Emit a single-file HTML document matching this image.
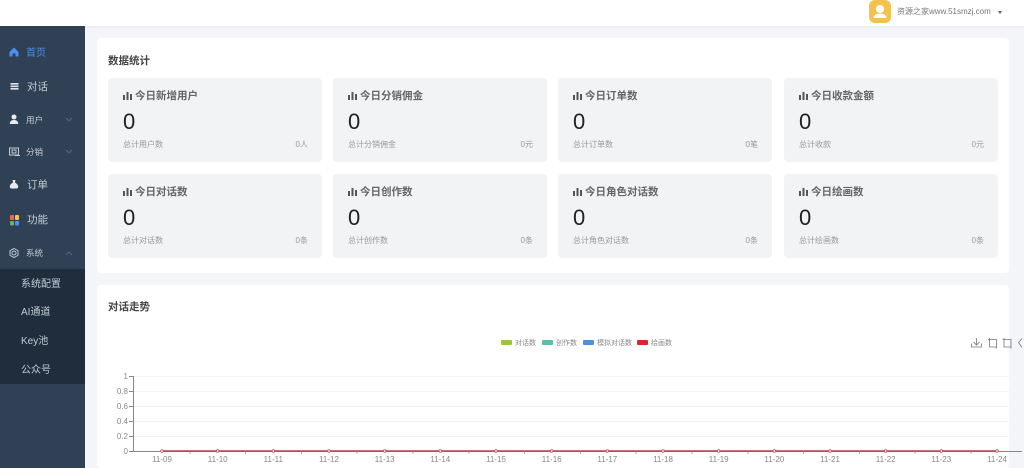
<!DOCTYPE html>
<html lang="zh"><head><meta charset="utf-8"><title>数据统计</title>
<style>
*{box-sizing:border-box;margin:0;padding:0}
html,body{width:1024px;height:468px;overflow:hidden;background:#f3f5f9;font-family:"Liberation Sans","Noto Sans CJK SC",sans-serif}
.a{position:absolute;white-space:nowrap}
#top{left:0;top:0;width:1024px;height:26px;background:#fff;box-shadow:0 1px 2px rgba(0,0,0,.06)}
#side{left:0;top:26px;width:85px;height:442px;background:#304156}
#sub{left:0;top:269px;width:85px;height:115px;background:#1f2d3d}
.m{color:#c3ccd6;line-height:14px;height:14px}
.s{color:#c3ccd6;font-size:10px;left:21px;line-height:14px}
.panel{background:#fff;border-radius:4px}
.stat{width:214px;height:84px;background:#f2f3f5;border-radius:4px}
.stat .t{position:absolute;left:27px;top:10px;font-size:10.5px;font-weight:700;color:#666;line-height:16px;white-space:nowrap}
.stat .n{position:absolute;left:15px;top:31px;font-size:22px;color:#222;line-height:26px}
.stat .l{position:absolute;left:15px;top:61px;font-size:8px;color:#999;line-height:12px;white-space:nowrap}
.stat .r{position:absolute;right:14px;top:61px;font-size:8px;color:#999;line-height:12px;white-space:nowrap}
.stat svg{position:absolute;left:15px;top:13px}
h2{font-size:10.5px;font-weight:700;color:#444;line-height:16px}
</style></head><body>
<div class="a" id="top"></div>
<div class="a" style="left:869px;top:0;width:22px;height:23px;border-radius:6px;background:#f2c14e"></div>
<svg class="a" style="left:869px;top:0" width="22" height="23" viewBox="0 0 22 23"><circle cx="11" cy="9" r="4" fill="#fff"/><path d="M4.5 18c0-3 3-4.500 6.500-4.500s6.500 1.500 6.500 4.500z" fill="#fff"/></svg>
<div class="a" style="left:897px;top:5px;font-size:8px;color:#777;line-height:13px">资源之家www.51smzj.com</div>
<div class="a" style="left:998px;top:11px;width:0;height:0;border-left:2.500px solid transparent;border-right:2.500px solid transparent;border-top:3px solid #666"></div>

<div class="a" id="side"></div>
<div class="a" id="sub"></div>
<svg class="a" style="left:0;top:26px" width="85" height="250" viewBox="0 26 85 250">
<path d="M9.500 52l4.500-4.500 4.500 4.500v4.500h-3v-3h-3v3h-3z" fill="#4a90f0"/>
<path d="M10.500 84h8v1.600h-8zM10.500 86.500h8v1.600h-8zM10.500 89h8v1.600h-8z" fill="#dfe4ea" transform="translate(0 -1)"/>
<circle cx="14" cy="117" r="2.500" fill="#e6eaef"/><path d="M9.800 124c0-3 1.800-4 4.200-4s4.200 1 4.200 4z" fill="#e6eaef"/>
<path d="M9.500 148h9v7h-9zM12 150h4v3h-4zM15 155.500h5" fill="none" stroke="#c3ccd6" stroke-width="1"/>
<path d="M12.500 180h3l-.6 2.500c2 1 3.300 2.500 3.300 4.200 0 1.300-1 1.800-2 1.800h-4.400c-1 0-2-.5-2-1.800 0-1.700 1.300-3.200 3.300-4.200z" fill="#e6eaef"/>
<rect x="10" y="215" width="4" height="5" rx="1" fill="#e8694a"/><rect x="15" y="215" width="4" height="5" rx="1" fill="#f2c14e"/><rect x="10" y="221" width="4" height="4.500" rx="1" fill="#5cb85c"/><rect x="15" y="221" width="4" height="4.500" rx="1" fill="#4a90f0"/>
<circle cx="14" cy="253" r="2" fill="none" stroke="#c3ccd6"/><path d="M14 248.500l4 2.250v4.500l-4 2.250-4-2.250v-4.500z" fill="none" stroke="#c3ccd6"/>
<path d="M66 118l3 3 3-3M66 150l3 3 3-3" fill="none" stroke="#58697c" stroke-width="1"/>
<path d="M66 255l3-3 3 3" fill="none" stroke="#58697c" stroke-width="1"/>
</svg>
<div class="a m" style="left:26px;top:47px;font-size:10px;color:#4a8cf0">首页</div>
<div class="a m" style="left:27px;top:80px;font-size:10.500px">对话</div>
<div class="a m" style="left:26px;top:113px;font-size:8.500px">用户</div>
<div class="a m" style="left:26px;top:145px;font-size:8.500px">分销</div>
<div class="a m" style="left:27px;top:178px;font-size:10.500px">订单</div>
<div class="a m" style="left:27px;top:213px;font-size:10.500px">功能</div>
<div class="a m" style="left:26px;top:246px;font-size:8.500px">系统</div>
<div class="a s" style="top:278px">系统配置</div>
<div class="a s" style="top:306px">AI通道</div>
<div class="a s" style="top:335px">Key池</div>
<div class="a s" style="top:364px">公众号</div>

<div class="a panel" style="left:97px;top:38px;width:912px;height:235px"></div>
<div class="a panel" style="left:97px;top:285px;width:912px;height:183px"></div>
<h2 class="a" style="left:108px;top:53px">数据统计</h2>
<h2 class="a" style="left:108px;top:299px">对话走势</h2>

<div class="a stat" style="left:108px;top:78px"><svg width="9" height="9"><path d="M0 4h2v5H0zM3.500 1h2v8h-2zM7 3h2v6H7z" fill="#555"/></svg><div class="t">今日新增用户</div><div class="n">0</div><div class="l">总计用户数</div><div class="r">0人</div></div>
<div class="a stat" style="left:333px;top:78px"><svg width="9" height="9"><path d="M0 4h2v5H0zM3.500 1h2v8h-2zM7 3h2v6H7z" fill="#555"/></svg><div class="t">今日分销佣金</div><div class="n">0</div><div class="l">总计分销佣金</div><div class="r">0元</div></div>
<div class="a stat" style="left:558px;top:78px"><svg width="9" height="9"><path d="M0 4h2v5H0zM3.500 1h2v8h-2zM7 3h2v6H7z" fill="#555"/></svg><div class="t">今日订单数</div><div class="n">0</div><div class="l">总计订单数</div><div class="r">0笔</div></div>
<div class="a stat" style="left:784px;top:78px"><svg width="9" height="9"><path d="M0 4h2v5H0zM3.500 1h2v8h-2zM7 3h2v6H7z" fill="#555"/></svg><div class="t">今日收款金额</div><div class="n">0</div><div class="l">总计收款</div><div class="r">0元</div></div>
<div class="a stat" style="left:108px;top:174px"><svg width="9" height="9"><path d="M0 4h2v5H0zM3.500 1h2v8h-2zM7 3h2v6H7z" fill="#555"/></svg><div class="t">今日对话数</div><div class="n">0</div><div class="l">总计对话数</div><div class="r">0条</div></div>
<div class="a stat" style="left:333px;top:174px"><svg width="9" height="9"><path d="M0 4h2v5H0zM3.500 1h2v8h-2zM7 3h2v6H7z" fill="#555"/></svg><div class="t">今日创作数</div><div class="n">0</div><div class="l">总计创作数</div><div class="r">0条</div></div>
<div class="a stat" style="left:558px;top:174px"><svg width="9" height="9"><path d="M0 4h2v5H0zM3.500 1h2v8h-2zM7 3h2v6H7z" fill="#555"/></svg><div class="t">今日角色对话数</div><div class="n">0</div><div class="l">总计角色对话数</div><div class="r">0条</div></div>
<div class="a stat" style="left:784px;top:174px"><svg width="9" height="9"><path d="M0 4h2v5H0zM3.500 1h2v8h-2zM7 3h2v6H7z" fill="#555"/></svg><div class="t">今日绘画数</div><div class="n">0</div><div class="l">总计绘画数</div><div class="r">0条</div></div>

<svg class="a" style="left:0;top:0" width="1024" height="468" viewBox="0 0 1024 468" font-family="Liberation Sans,Noto Sans CJK SC,sans-serif">
<rect x="501" y="340" width="11" height="5" rx="1" fill="#9bc53d"/>
<rect x="542" y="340" width="11" height="5" rx="1" fill="#5bbdaa"/>
<rect x="583" y="340" width="11" height="5" rx="1" fill="#4a90e2"/>
<rect x="637" y="340" width="11" height="5" rx="1" fill="#d9252b"/>
<g font-size="7" fill="#888"><text x="515" y="345">对话数</text><text x="556" y="345">创作数</text><text x="597" y="345">模拟对话数</text><text x="651" y="345">绘画数</text></g>
<g fill="none" stroke="#777" stroke-width=".8">
<path d="M976.500 338v7M973.500 342l3 3 3-3M971.500 343.500v3.500h10v-3.500"/>
<path d="M988 339.500h2M989.500 338v9h7.500M989.500 339.500h7v9"/>
<path d="M1002.500 339.500h2M1004 338v9h7.500M1004 339.500h7v9"/>
<path d="M1022 338.500l-3.500 4 3.500 5"/>
</g>
<g stroke="#f3f3f3" stroke-width="1"><path d="M134 376.500H1009M134 391.500H1009M134 406.500H1009M134 421.500H1009M134 436.500H1009"/></g>
<g stroke="#888" stroke-width="1" fill="none"><path d="M133.500 376V451.500M129 376.500h5M129 391.500h5M129 406.500h5M129 421.500h5M129 436.500h5M129 451.500h5"/><path d="M134 451.500H1022"/>
<path d="M190 451v3M245.500 451v3M301.500 451v3M357 451v3M413 451v3M469 451v3M524.500 451v3M580.500 451v3M636 451v3M692 451v3M748 451v3M803.500 451v3M859.500 451v3M915 451v3M971 451v3" stroke="#aaa"/></g>
<g font-size="8" fill="#888" text-anchor="end"><text x="128" y="379">1</text><text x="128" y="394">0.8</text><text x="128" y="409">0.6</text><text x="128" y="424">0.4</text><text x="128" y="439">0.2</text><text x="128" y="454">0</text></g>
<path d="M162 451H997" stroke="#b5444e" stroke-width="1.500" fill="none"/>
<g fill="#fff" stroke="#c2505a" stroke-width=".8"><circle cx="162" cy="451" r="1.300"/><circle cx="217.700" cy="451" r="1.300"/><circle cx="273.300" cy="451" r="1.300"/><circle cx="329" cy="451" r="1.300"/><circle cx="384.700" cy="451" r="1.300"/><circle cx="440.300" cy="451" r="1.300"/><circle cx="496" cy="451" r="1.300"/><circle cx="551.700" cy="451" r="1.300"/><circle cx="607.300" cy="451" r="1.300"/><circle cx="663" cy="451" r="1.300"/><circle cx="718.700" cy="451" r="1.300"/><circle cx="774.300" cy="451" r="1.300"/><circle cx="830" cy="451" r="1.300"/><circle cx="885.700" cy="451" r="1.300"/><circle cx="941.300" cy="451" r="1.300"/><circle cx="997" cy="451" r="1.300"/></g>
<g font-size="8" fill="#888" text-anchor="middle"><text x="162" y="462">11-09</text><text x="217.700" y="462">11-10</text><text x="273.300" y="462">11-11</text><text x="329" y="462">11-12</text><text x="384.700" y="462">11-13</text><text x="440.300" y="462">11-14</text><text x="496" y="462">11-15</text><text x="551.700" y="462">11-16</text><text x="607.300" y="462">11-17</text><text x="663" y="462">11-18</text><text x="718.700" y="462">11-19</text><text x="774.300" y="462">11-20</text><text x="830" y="462">11-21</text><text x="885.700" y="462">11-22</text><text x="941.300" y="462">11-23</text><text x="997" y="462">11-24</text></g>
</svg>
</body></html>
